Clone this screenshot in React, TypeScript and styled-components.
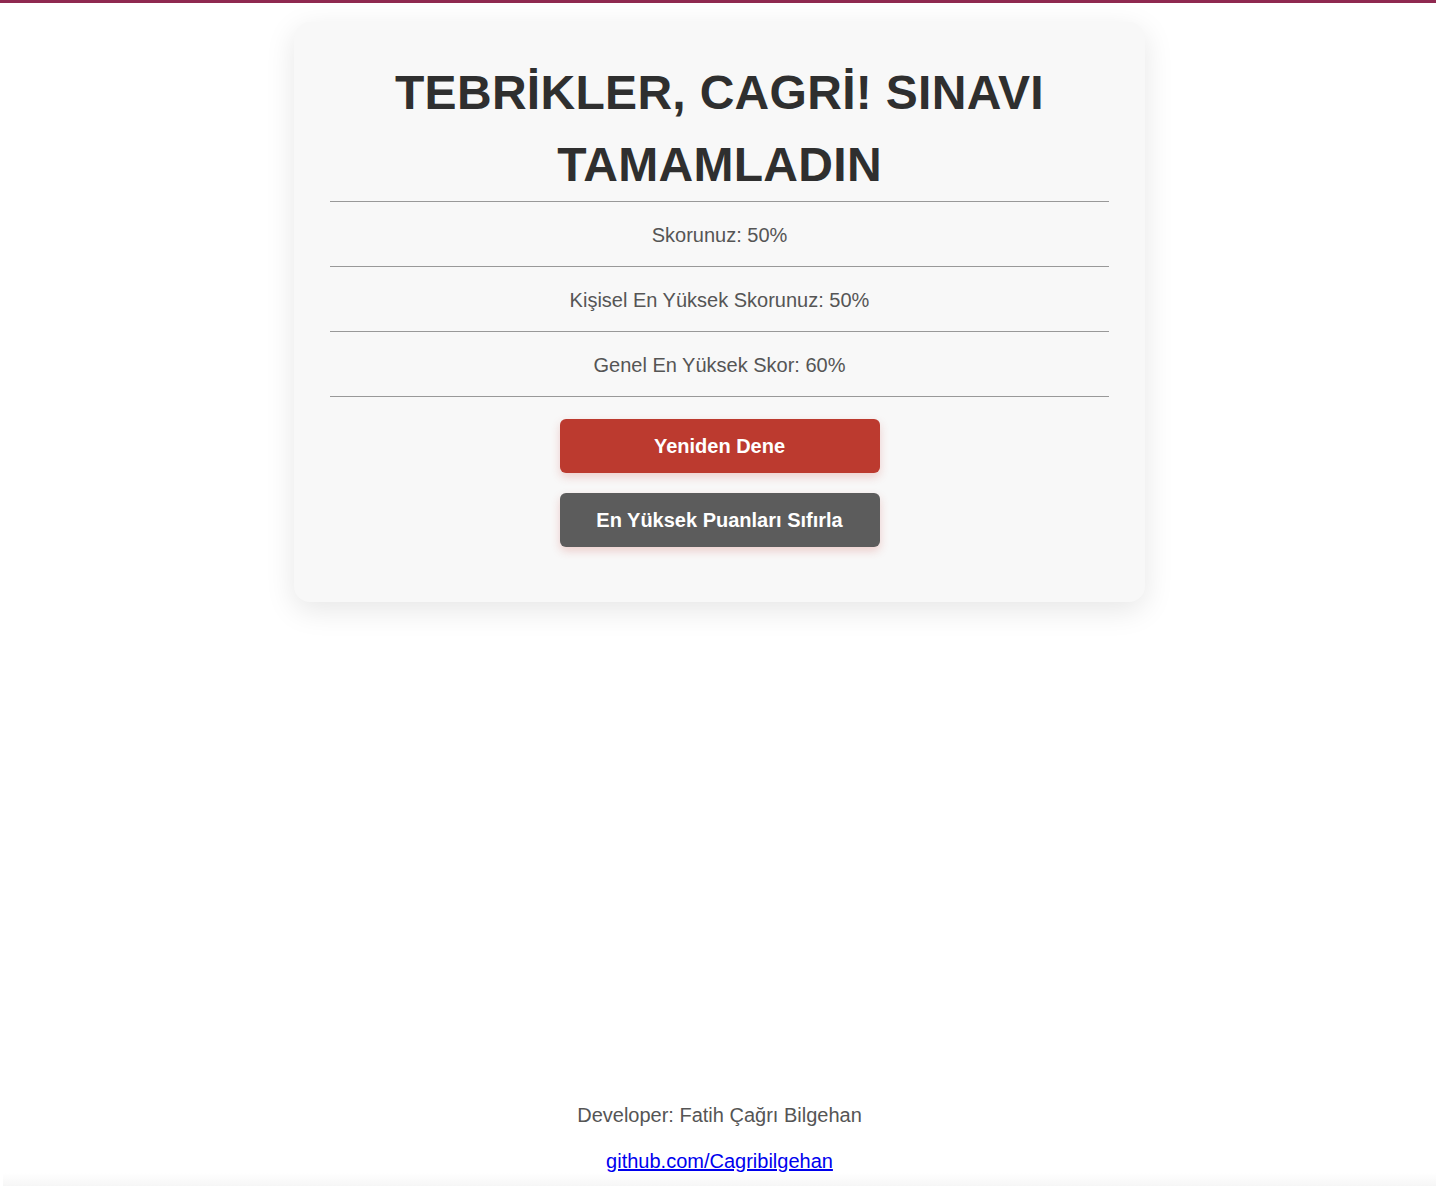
import * as React from 'react';
import styled, { createGlobalStyle } from 'styled-components';

const GlobalStyle = createGlobalStyle`
  html, body {
    margin: 0;
    padding: 0;
    background: #ffffff;
    font-family: "Liberation Sans", Arial, Helvetica, sans-serif;
  }
  * {
    box-sizing: border-box;
  }
`;

const Page = styled.div`
  min-height: 1186px;
  display: flex;
  flex-direction: column;
  align-items: center;
  padding-left: 3px;
  border-top: 3px solid #8f2950;
`;

const Card = styled.div`
  margin-top: 19px;
  width: 851px;
  background: #f8f8f8;
  border-radius: 16px;
  padding: 35px 36px 55px;
  box-shadow: 0 8px 30px rgba(0, 0, 0, 0.1);
  display: flex;
  flex-direction: column;
  align-items: center;
`;

const Title = styled.h1`
  margin: 0;
  font-size: 48px;
  line-height: 72px;
  font-weight: 700;
  letter-spacing: 0.3px;
  text-transform: uppercase;
  text-align: center;
  color: #2f2f2f;
  padding: 0 30px;
`;

const Divider = styled.hr`
  width: 100%;
  margin: 0;
  border: none;
  border-top: 1px solid #999999;
`;

const ScoreLine = styled.p`
  margin: 21px 0 19px;
  font-size: 20px;
  line-height: 24px;
  color: #555555;
  text-align: center;
`;

const Actions = styled.div`
  margin-top: 22px;
  display: flex;
  flex-direction: column;
  gap: 20px;
`;

const ActionButton = styled.button<{ $tone: string }>`
  width: 320px;
  height: 54px;
  border: none;
  border-radius: 6px;
  background: ${(props) => props.$tone};
  color: #ffffff;
  font-family: "Liberation Sans", Arial, sans-serif;
  font-size: 20px;
  font-weight: 700;
  cursor: pointer;
  box-shadow: 0 4px 10px rgba(200, 60, 50, 0.22);
`;

const Footer = styled.footer`
  margin-top: auto;
  width: 100%;
  padding: 0 0 13px;
  display: flex;
  flex-direction: column;
  align-items: center;
  gap: 22px;
  background: linear-gradient(to bottom, #ffffff 0, #ffffff 70px, #f6f6f6 100%);
`;

const FooterText = styled.p`
  margin: 0;
  font-size: 20px;
  line-height: 24px;
  color: #555555;
`;

const FooterLink = styled.a`
  font-size: 20px;
  line-height: 24px;
  color: #0000ee;
  text-decoration: underline;
`;

export default function App() {
  const scores = [
    'Skorunuz: 50%',
    'Kişisel En Yüksek Skorunuz: 50%',
    'Genel En Yüksek Skor: 60%',
  ];

  return (
    <Page>
      <GlobalStyle />
      <Card>
        <Title>TEBRİKLER, CAGRİ! SINAVI TAMAMLADIN</Title>
        <Divider />
        {scores.map((s) => (
          <React.Fragment key={s}>
            <ScoreLine>{s}</ScoreLine>
            <Divider />
          </React.Fragment>
        ))}
        <Actions>
          <ActionButton $tone="#bc3a2f">Yeniden Dene</ActionButton>
          <ActionButton $tone="#5c5c5c">En Yüksek Puanları Sıfırla</ActionButton>
        </Actions>
      </Card>
      <Footer>
        <FooterText>Developer: Fatih Çağrı Bilgehan</FooterText>
        <FooterLink href="#">github.com/Cagribilgehan</FooterLink>
      </Footer>
    </Page>
  );
}
